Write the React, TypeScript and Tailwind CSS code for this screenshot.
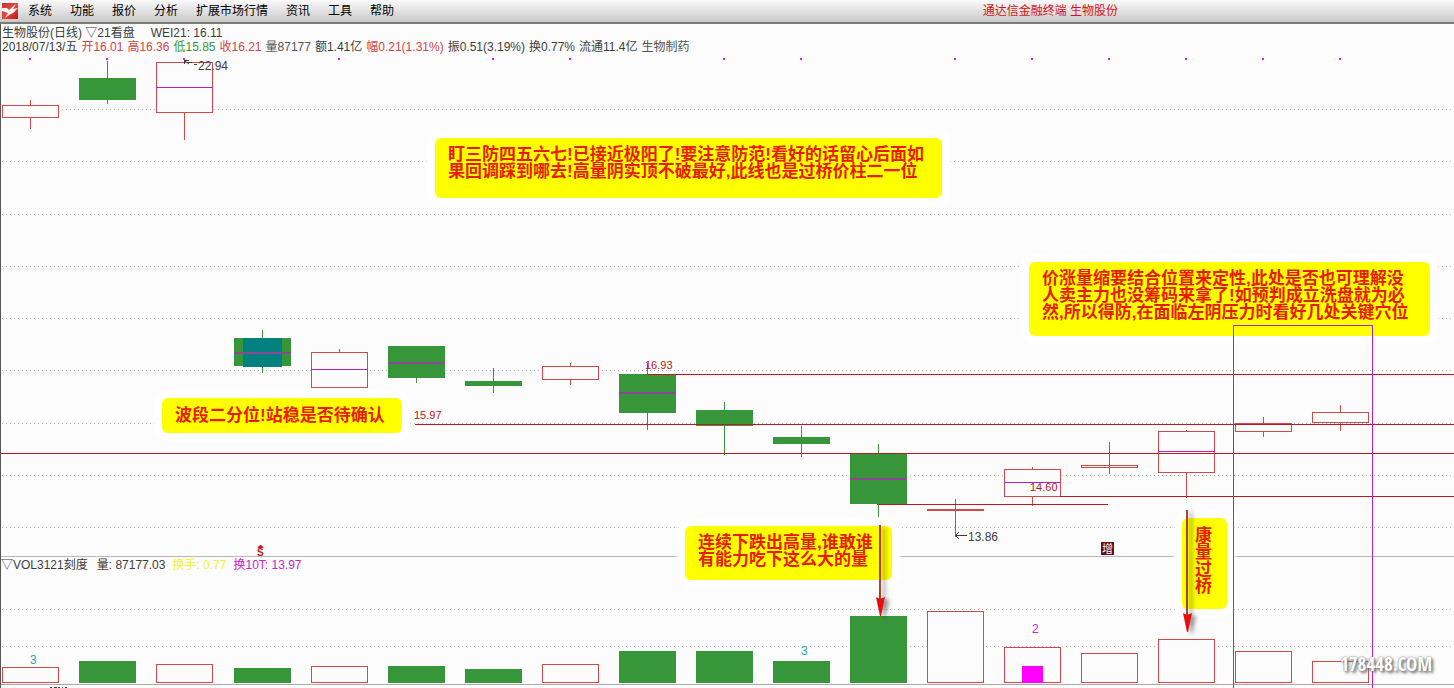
import React from "react";

type Kind = "up" | "down";

interface Candle {
  cx: number;
  kind: Kind;
  high: number;
  top: number;
  bottom: number;
  low: number;
  mid?: number;
  volume: number;
}

const RED = "#d04a4a";
const GREEN = "#38963a";
const LINE = "#c01820";
const PURPLE = "#b421bd";
const PAPER = "#fcfcfc";

const candles: Candle[] = [
  { cx: 30, kind: "up", high: 100, top: 105, bottom: 117, low: 128, volume: 667 },
  { cx: 107, kind: "down", high: 61, top: 78, bottom: 99, low: 103, volume: 661 },
  { cx: 184, kind: "up", high: 62, top: 62, bottom: 112, low: 139, mid: 87, volume: 664 },
  { cx: 262, kind: "down", high: 330, top: 338, bottom: 365, low: 372, mid: 352, volume: 668 },
  { cx: 339, kind: "up", high: 349, top: 352, bottom: 387, low: 387, mid: 369, volume: 666 },
  { cx: 416, kind: "down", high: 346, top: 346, bottom: 377, low: 382, mid: 362, volume: 666 },
  { cx: 493, kind: "down", high: 368, top: 381, bottom: 385, low: 392, volume: 669 },
  { cx: 570, kind: "up", high: 363, top: 366, bottom: 379, low: 384, volume: 664 },
  { cx: 647, kind: "down", high: 363, top: 374, bottom: 412, low: 429, mid: 392, volume: 651 },
  { cx: 724, kind: "down", high: 402, top: 410, bottom: 425, low: 454, volume: 651 },
  { cx: 801, kind: "down", high: 426, top: 437, bottom: 443, low: 456, volume: 661 },
  { cx: 878, kind: "down", high: 444, top: 453, bottom: 503, low: 516, mid: 478, volume: 616 },
  { cx: 955, kind: "up", high: 499, top: 509, bottom: 510, low: 536, volume: 611 },
  { cx: 1032, kind: "up", high: 467, top: 469, bottom: 496, low: 505, mid: 482, volume: 647 },
  { cx: 1109, kind: "up", high: 442, top: 465, bottom: 467, low: 473, volume: 653 },
  { cx: 1186, kind: "up", high: 430, top: 431, bottom: 472, low: 497, mid: 451, volume: 639 },
  { cx: 1263, kind: "up", high: 417, top: 423, bottom: 431, low: 436, volume: 651 },
  { cx: 1340, kind: "up", high: 405, top: 412, bottom: 422, low: 430, volume: 661 },
];

const gridLines = [109, 161, 214, 266, 318, 370, 423, 475, 527, 609, 646];
const signalDots = [30, 107, 184, 339, 493, 570, 724, 801, 955, 1032, 1109, 1186, 1263, 1340];

const menus = ["系统", "功能", "报价", "分析", "扩展市场行情", "资讯", "工具", "帮助"];

const quotes = [
  { text: "2018/07/13/五", tone: "text-[#3c3c3c]" },
  { text: "开16.01", tone: "text-[#d0454a]" },
  { text: "高16.36", tone: "text-[#d0454a]" },
  { text: "低15.85", tone: "text-[#38963a]" },
  { text: "收16.21", tone: "text-[#d0454a]" },
  { text: "量87177", tone: "text-[#555555]" },
  { text: "额1.41亿", tone: "text-[#3c3c3c]" },
  { text: "幅0.21(1.31%)", tone: "text-[#d0454a]" },
  { text: "振0.51(3.19%)", tone: "text-[#3c3c3c]" },
  { text: "换0.77%", tone: "text-[#3c3c3c]" },
  { text: "流通11.4亿", tone: "text-[#3c3c3c]" },
  { text: "生物制药", tone: "text-[#555555]" },
];

function Logo() {
  return (
    <svg width="18" height="16" viewBox="0 0 18 16" aria-hidden="true">
      <defs>
        <linearGradient id="logo" x1="0" y1="0" x2="1" y2="1">
          <stop offset="0" stopColor="#c8322c" />
          <stop offset="0.5" stopColor="#e04a46" />
          <stop offset="1" stopColor="#c01418" />
        </linearGradient>
      </defs>
      <rect width="16" height="16" fill="url(#logo)" />
      <path d="M0 5 L5 5 L7 7 L14 1 L11 6 L16 5 L11 10 L7 12 L3 15 L6 10 L0 8 Z" fill="#fff4f2" />
    </svg>
  );
}

function MenuBar() {
  return (
    <header className="flex h-6 items-center border-b-2 border-[#7c7a74] bg-linear-to-b from-[#fafafa] to-[#c9c9c9] pl-[2px] text-xs text-black">
      <Logo />
      <nav className="ml-2 flex flex-1 gap-[18px]">
        {menus.map((m) => (
          <button key={m} type="button" className="whitespace-nowrap">
            {m}
          </button>
        ))}
      </nav>
      <h1 className="mr-[336px] whitespace-pre text-[#d41414]">通达信金融终端 生物股份</h1>
    </header>
  );
}

function CandleShape({ c }: { c: Candle }) {
  const x = c.cx - 28;
  const color = c.kind === "up" ? RED : GREEN;
  return (
    <g>
      <rect x={c.cx} y={c.high} width="1" height={c.low - c.high + 1} fill={color} />
      {c.kind === "up" ? (
        <rect x={x + 0.5} y={c.top + 0.5} width="56" height={c.bottom - c.top} fill={PAPER} stroke={color} />
      ) : (
        <rect x={x} y={c.top} width="57" height={c.bottom - c.top + 1} fill={color} />
      )}
      {c.cx === 262 && <rect x="243" y="338" width="39" height="29" fill="#04807f" />}
      {c.cx === 955 || c.cx === 1109 ? (
        <rect x={c.cx} y={c.high} width="1" height={c.low - c.high + 1} fill={color} />
      ) : null}
      {c.mid !== undefined &&
        (c.kind === "up" ? (
          <rect x={x} y={c.mid} width="57" height="1" fill={PURPLE} />
        ) : (
          <rect x={x} y={c.mid} width="57" height="2" fill="#8d4596" />
        ))}
    </g>
  );
}

function VolumeBar({ c }: { c: Candle }) {
  const x = c.cx - 28;
  return c.kind === "up" ? (
    <rect x={x + 0.5} y={c.volume + 0.5} width="56" height={682 - c.volume} fill={PAPER} stroke={RED} />
  ) : (
    <rect x={x} y={c.volume} width="57" height={683 - c.volume} fill={GREEN} />
  );
}

function ChartDrawing() {
  return (
    <svg className="absolute inset-0 h-full w-full" role="img" aria-label="日线与成交量">
      <g transform="translate(0 -24)">
        {gridLines.map((y) => (
          <line key={y} x1="2" x2="100%" y1={y + 0.5} y2={y + 0.5} stroke="#b4b4b4" strokeDasharray="1 3" />
        ))}
        <rect x="0" y="556" width="100%" height="1" fill="#b8b8b8" />
        <rect x="0" y="684" width="100%" height="1" fill="#b0a8a8" />
        <path d="M50 687.5 h2 M54 687.5 h3 M58 687.5 h2 M62 687.5 h1 M65 687.5 h2" stroke="#3c3c3c" />
        {candles.map((c) => (
          <VolumeBar key={c.cx} c={c} />
        ))}
        <rect x="1022" y="666" width="21" height="17" fill="#ff00ff" />
        {candles.map((c) => (
          <CandleShape key={c.cx} c={c} />
        ))}
        {signalDots.map((x) => (
          <rect key={x} x={x - 1} y="58" width="2" height="2" fill="#d820d8" />
        ))}
        <g stroke={LINE}>
          <line x1="647" x2="100%" y1="374.5" y2="374.5" />
          <line x1="415" x2="100%" y1="424.5" y2="424.5" />
          <line x1="0" x2="100%" y1="453.5" y2="453.5" />
          <line x1="1060" x2="100%" y1="496.5" y2="496.5" />
          <line x1="877" x2="1108" y1="504.5" y2="504.5" />
        </g>
        <path d="M197 64.5 h-3 M192 62.5 h-4 M184 60.5 h5 M184.5 60 v4 M185 61 l4 3" fill="none" stroke="#3c3c3c" />
        <path d="M967 535.5 H956 M959 532 L955.500 535.500 L959 539" fill="none" stroke="#3c3c3c" />
        <g fontSize="12" fill="#3c3c3c">
          <text x="198" y="70">22.94</text>
          <text x="968" y="541">13.86</text>
        </g>
        <g fontSize="11" fill="#b4181e">
          <text x="645" y="369">16.93</text>
          <text x="414" y="419">15.97</text>
          <text x="1030" y="491">14.60</text>
        </g>
        <g fontSize="12">
          <text x="30" y="664" fill="#2ba3a8">3</text>
          <text x="801" y="655" fill="#2ba3a8">3</text>
          <text x="1032" y="633" fill="#cc22cc">2</text>
        </g>
        <text x="257" y="556" fontSize="10" fontWeight="bold" fill="#c8141a">S</text>
        <path d="M257 548 L260 545 H261 L264 548 Z" fill="#c8141a" />
        <rect x="1101" y="542" width="13" height="13" fill="#6a0c12" />
        <text x="1102" y="553" fontSize="11" fill="#ffffff">增</text>
      </g>
    </svg>
  );
}

function Note({ className, children }: { className: string; children: React.ReactNode }) {
  return (
    <p
      className={
        "absolute rounded-md bg-[#ffff00] text-[17px] font-bold leading-[17px] text-[#e81c00] shadow-[0_0_3px_8px_#ffffff] whitespace-pre " +
        className
      }
    >
      {children}
    </p>
  );
}

function Overlay() {
  return (
    <svg className="pointer-events-none absolute inset-0 h-full w-full" aria-hidden="true">
      <defs>
        <filter id="soft" x="-300%" y="-20%" width="800%" height="150%">
          <feDropShadow dx="4" dy="2" stdDeviation="2" floodColor="#333333" floodOpacity="0.55" />
        </filter>
      </defs>
      <g transform="translate(0 -24)">
        <rect x="1233.500" y="325.500" width="139" height="380" fill="none" stroke={PURPLE} />
        <g filter="url(#soft)">
          <rect x="879" y="525" width="2" height="74" fill="#a84432" />
          <path d="M876 597 L880 599 L885 597 L881 616 H880 Z" fill="#e80c0c" />
        </g>
        <g filter="url(#soft)">
          <rect x="1186" y="510" width="2" height="105" fill="#a84432" />
          <path d="M1183 613 L1187 615 L1192 613 L1188 632 H1187 Z" fill="#e80c0c" />
        </g>
      </g>
    </svg>
  );
}

export default function App() {
  return (
    <div className="flex h-screen min-h-[688px] flex-col overflow-hidden bg-[#fcfcfc] font-['Liberation_Sans','Noto_Sans_CJK_SC',sans-serif] text-xs">
      <MenuBar />
      <main className="relative flex flex-1 flex-col overflow-hidden border-l border-[#555555]">
        <div className="absolute inset-y-0 -left-px right-0">
          <ChartDrawing />
        </div>

        <section className="relative h-[533px] pl-px pt-[2px] leading-[14px] text-[#3c3c3c]">
          <div className="flex gap-4">
            <h2>生物股份(日线) ▽21看盘</h2>
            <span>WEI21: 16.11</span>
          </div>
          <div className="flex gap-1 whitespace-nowrap">
            {quotes.map((q) => (
              <span key={q.text} className={q.tone}>
                {q.text}
              </span>
            ))}
          </div>
        </section>

        <section className="relative flex-1 pt-px leading-[14px] text-[#3c3c3c]">
          <div className="flex gap-[7px] whitespace-nowrap">
            <h2 className="mr-[2px]">▽VOL3121刻度</h2>
            <span>量: 87177.03</span>
            <span className="text-[#f4f03c]">换手: 0.77</span>
            <span className="text-[#cc22cc]">换10T: 13.97</span>
          </div>
        </section>

        <div className="absolute inset-y-0 -left-px right-0">
          <Note className="left-[435px] top-[114px] w-[507px] px-[13px] pb-[18px] pt-2">
            {"盯三防四五六七!已接近极阳了!要注意防范!看好的话留心后面如\n果回调踩到哪去!高量阴实顶不破最好,此线也是过桥价柱二一位"}
          </Note>
          <Note className="left-[1029px] top-[238px] w-[401px] px-[13px] pb-[15px] pt-2">
            {"价涨量缩要结合位置来定性,此处是否也可理解没\n人卖主力也没筹码来拿了!如预判成立洗盘就为必\n然,所以得防,在面临左阴压力时看好几处关键穴位"}
          </Note>
          <Note className="left-[162px] top-[374px] w-[240px] px-[13px] py-[9px]">
            波段二分位!站稳是否待确认
          </Note>
          <Note className="left-[685px] top-[502px] w-[207px] px-[13px] pb-3 pt-2">
            {"连续下跌出高量,谁敢谁\n有能力吃下这么大的量"}
          </Note>
          <Note className="left-[1182px] top-[494px] w-[45px] px-[13px] pb-[14px] pt-[9px]">{"康\n量\n过\n桥"}</Note>
          <Overlay />
          <span className="absolute left-[1340px] top-[628px] font-['Liberation_Sans_Narrow','Open_Sans_Condensed','Liberation_Sans'] text-[19px] font-bold leading-6 text-white [text-shadow:0_0_1px_#888,0_0_2px_#888,2px_2px_3px_#666]">
            178448.COM
          </span>
        </div>
      </main>
    </div>
  );
}
